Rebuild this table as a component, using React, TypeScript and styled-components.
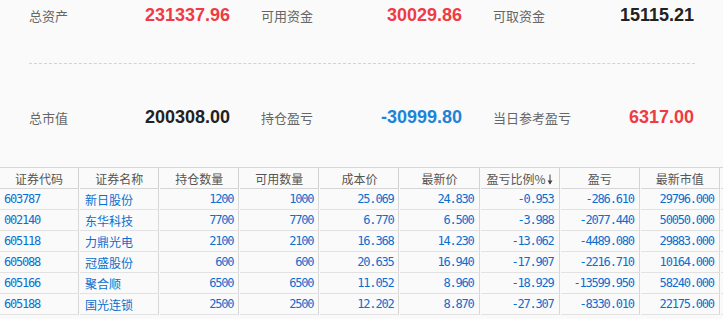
import React from "react";
import styled, { createGlobalStyle } from "styled-components";

const GlobalStyle = createGlobalStyle`
  html, body {
    margin: 0;
    padding: 0;
    background: #fafafa;
    overflow: hidden;
  }
  body {
    font-family: "Noto Sans CJK SC", "Liberation Sans", sans-serif;
  }
`;

const Page = styled.div`
  width: 723px;
  height: 319px;
  overflow: hidden;
  background: #fafafa;
`;

const Summary = styled.div`
  padding: 0 0 0 29px;
`;

const SummaryRow = styled.div<{ $top: number }>`
  display: grid;
  grid-template-columns: repeat(3, 201px);
  column-gap: 31px;
  height: 30px;
  margin-top: ${(p) => p.$top}px;
`;

const Item = styled.div`
  display: flex;
  align-items: center;
  justify-content: space-between;
`;

const Label = styled.span`
  font-size: 13px;
  color: #666;
`;

const Value = styled.span<{ $tone: "red" | "blue" | "dark" }>`
  font-family: "Liberation Sans", Arial, sans-serif;
  font-weight: bold;
  font-size: 18px;
  color: ${(p) =>
    p.$tone === "red" ? "#ee3b44" : p.$tone === "blue" ? "#1a84d8" : "#222"};
`;

const Divider = styled.div`
  width: 666px;
  margin-top: 33px;
  border-top: 1px dashed #d3d3d3;
`;

const TableWrap = styled.div`
  margin-top: 35px;
  border-top: 1px solid #d6d6d6;
  overflow: hidden;
`;

const Table = styled.table`
  border-collapse: separate;
  border-spacing: 1px 0;
  margin-left: -1px;
  table-layout: fixed;
  width: 802px;
`;

const Th = styled.th`
  width: 78px;
  height: 20px;
  padding: 0;
  font-weight: normal;
  font-size: 12px;
  color: #555;
  text-align: center;
  white-space: nowrap;
  border-right: 1px solid #d2d2d2;
  border-bottom: 1px solid #d6d6d6;
  background: #fafafa;
`;

const Td = styled.td<{ $align?: "left" | "right"; $cjk?: boolean }>`
  height: 20px;
  padding: 0 ${(p) => (p.$align === "left" ? "0" : "5px")} 0
    ${(p) => (p.$align === "left" ? (p.$cjk ? "5px" : "4px") : "0")};
  text-align: ${(p) => p.$align || "right"};
  color: #0a6fd0;
  white-space: nowrap;
  font-family: ${(p) =>
    p.$cjk
      ? `"Noto Sans CJK SC", sans-serif`
      : `"DejaVu Sans Mono", "Liberation Mono", monospace`};
  font-size: ${(p) => (p.$cjk ? "12px" : "12px")};
  letter-spacing: ${(p) => (p.$cjk ? "0" : "-1.2px")};
  border-right: 1px solid #d8d8d8;
  border-bottom: 1px solid #e2e2e2;
  background: #fafafa;
`;

const SortArrow = () => (
  <svg width="6" height="11" viewBox="0 0 6 11" style={{ marginLeft: 1, verticalAlign: -1 }}>
    <path d="M3 0.5V10" stroke="#444" strokeWidth="1" fill="none" />
    <path d="M0.5 6.5L3 10.5L5.5 6.5Z" fill="#444" />
  </svg>
);

const summary = [
  [
    { label: "总资产", value: "231337.96", tone: "red" as const },
    { label: "可用资金", value: "30029.86", tone: "red" as const },
    { label: "可取资金", value: "15115.21", tone: "dark" as const },
  ],
  [
    { label: "总市值", value: "200308.00", tone: "dark" as const },
    { label: "持仓盈亏", value: "-30999.80", tone: "blue" as const },
    { label: "当日参考盈亏", value: "6317.00", tone: "red" as const },
  ],
];

const headers = ["证券代码", "证券名称", "持仓数量", "可用数量", "成本价", "最新价", "盈亏比例%", "盈亏", "最新市值", ""];

const rows = [
  ["603787", "新日股份", "1200", "1000", "25.069", "24.830", "-0.953", "-286.610", "29796.000"],
  ["002140", "东华科技", "7700", "7700", "6.770", "6.500", "-3.988", "-2077.440", "50050.000"],
  ["605118", "力鼎光电", "2100", "2100", "16.368", "14.230", "-13.062", "-4489.080", "29883.000"],
  ["605088", "冠盛股份", "600", "600", "20.635", "16.940", "-17.907", "-2216.710", "10164.000"],
  ["605166", "聚合顺", "6500", "6500", "11.052", "8.960", "-18.929", "-13599.950", "58240.000"],
  ["605188", "国光连锁", "2500", "2500", "12.202", "8.870", "-27.307", "-8330.010", "22175.000"],
];

export default function App() {
  return (
    <Page>
      <GlobalStyle />
      <Summary>
        <SummaryRow $top={0}>
          {summary[0].map((s) => (
            <Item key={s.label}>
              <Label>{s.label}</Label>
              <Value $tone={s.tone}>{s.value}</Value>
            </Item>
          ))}
        </SummaryRow>
        <Divider />
        <SummaryRow $top={38}>
          {summary[1].map((s) => (
            <Item key={s.label}>
              <Label>{s.label}</Label>
              <Value $tone={s.tone}>{s.value}</Value>
            </Item>
          ))}
        </SummaryRow>
      </Summary>

      <TableWrap>
        <Table>
          <thead>
            <tr>
              {headers.map((h, i) => (
                <Th key={i}>
                  {h}
                  {i === 6 && <SortArrow />}
                </Th>
              ))}
            </tr>
          </thead>
          <tbody>
            {rows.map((r) => (
              <tr key={r[0]}>
                <Td $align="left">{r[0]}</Td>
                <Td $align="left" $cjk>
                  {r[1]}
                </Td>
                {r.slice(2).map((c, i) => (
                  <Td key={i}>{c}</Td>
                ))}
                <Td />
              </tr>
            ))}
          </tbody>
        </Table>
      </TableWrap>
    </Page>
  );
}
